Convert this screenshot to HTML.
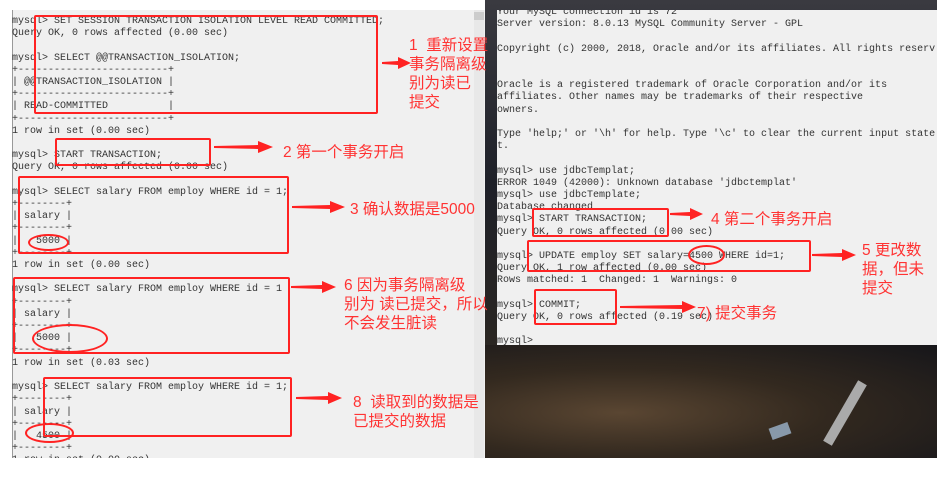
<!DOCTYPE html>
<html><head><meta charset="utf-8"><style>
body{margin:0;width:952px;height:481px;background:#fff;position:relative;overflow:hidden;font-family:"Liberation Mono",monospace}
.p{position:absolute}
.t{position:absolute;font-size:10px;line-height:12.2px;color:#333;white-space:pre;font-family:"Liberation Mono",monospace}
.b{position:absolute;border:2px solid #f22;border-radius:2px}
.e{position:absolute;border:2px solid #f22;border-radius:50%}
.l{position:absolute;color:#f33;font-family:"Liberation Sans","Noto Sans CJK SC",sans-serif;font-size:15.5px;line-height:19px;white-space:pre}
</style></head><body>
<div class="p" style="left:12px;top:10px;width:473px;height:448px;background:#f0f0f0;border-left:1px solid #999"></div>
<div class="p" style="left:474px;top:10px;width:10px;height:448px;background:#e8e8e8"></div>
<div class="p" style="left:474px;top:12px;width:10px;height:8px;background:#ccc"></div>
<div class="p" style="left:485px;top:0;width:452px;height:458px;background:linear-gradient(180deg,#3a3a40 0%,#1e2028 40%,#2a2622 75%,#4a3a2a 100%)"></div>
<div class="p" style="left:485px;top:345px;width:452px;height:113px;background:radial-gradient(ellipse at 30% 60%,#5a4632 0%,#33291f 45%,#16161a 100%)"></div>
<div class="p" style="left:840px;top:378px;width:10px;height:70px;background:#aaa;transform:rotate(30deg)"></div>
<div class="p" style="left:770px;top:425px;width:20px;height:12px;background:#8899aa;transform:rotate(-20deg)"></div>
<div class="p" style="left:497px;top:10px;width:440px;height:335px;background:#f0f0f0"></div>

<div class="t" style="left:12px;top:16px">mysql&gt; SET SESSION TRANSACTION ISOLATION LEVEL READ COMMITTED;
Query OK, 0 rows affected (0.00 sec)

mysql&gt; SELECT @@TRANSACTION_ISOLATION;
+-------------------------+
| @@TRANSACTION_ISOLATION |
+-------------------------+
| READ-COMMITTED          |
+-------------------------+
1 row in set (0.00 sec)

mysql&gt; START TRANSACTION;
Query OK, 0 rows affected (0.00 sec)

mysql&gt; SELECT salary FROM employ WHERE id = 1;
+--------+
| salary |
+--------+
|   5000 |
+--------+
1 row in set (0.00 sec)

mysql&gt; SELECT salary FROM employ WHERE id = 1
+--------+
| salary |
+--------+
|   5000 |
+--------+
1 row in set (0.03 sec)

mysql&gt; SELECT salary FROM employ WHERE id = 1;
+--------+
| salary |
+--------+
|   4500 |
+--------+
1 row in set (0.00 sec)</div>
<div class="p" style="left:12px;top:458px;width:480px;height:23px;background:#fff"></div>

<div class="t" style="left:497px;top:7px;clip-path:inset(3px 0 0 0)">Your MySQL connection id is 72
Server version: 8.0.13 MySQL Community Server - GPL

Copyright (c) 2000, 2018, Oracle and/or its affiliates. All rights reserv


Oracle is a registered trademark of Oracle Corporation and/or its
affiliates. Other names may be trademarks of their respective
owners.

Type 'help;' or '\h' for help. Type '\c' to clear the current input state
t.

mysql&gt; use jdbcTemplat;
ERROR 1049 (42000): Unknown database 'jdbctemplat'
mysql&gt; use jdbcTemplate;
Database changed
mysql&gt; START TRANSACTION;
Query OK, 0 rows affected (0.00 sec)

mysql&gt; UPDATE employ SET salary=4500 WHERE id=1;
Query OK, 1 row affected (0.00 sec)
Rows matched: 1  Changed: 1  Warnings: 0

mysql&gt; COMMIT;
Query OK, 0 rows affected (0.19 sec)

mysql&gt;</div>

<div class="b" style="left:34px;top:15px;width:340px;height:95px"></div>
<div class="b" style="left:55px;top:138px;width:152px;height:24px"></div>
<div class="b" style="left:18px;top:176px;width:267px;height:74px"></div>
<div class="b" style="left:13px;top:277px;width:273px;height:73px"></div>
<div class="b" style="left:43px;top:377px;width:245px;height:56px"></div>
<div class="e" style="left:28px;top:234px;width:37px;height:13px"></div>
<div class="e" style="left:32px;top:324px;width:72px;height:25px"></div>
<div class="e" style="left:25px;top:423px;width:45px;height:16px"></div>
<div class="b" style="left:532px;top:208px;width:133px;height:25px"></div>
<div class="b" style="left:527px;top:240px;width:280px;height:28px"></div>
<div class="e" style="left:688px;top:245px;width:33px;height:16px"></div>
<div class="b" style="left:534px;top:289px;width:79px;height:32px"></div>

<svg class="p" style="left:0;top:0" width="952" height="481">
<g fill="#f22">
<polygon points="382,62 398,61 398,57 411,63 398,69 398,65 382,64"/>
<polygon points="214,146 258,145 258,141 273,147 258,153 258,149 214,148"/>
<polygon points="292,206 330,205 330,201 345,207 330,213 330,209 292,208"/>
<polygon points="291,286 322,285 322,281 336,287 322,293 322,289 291,288"/>
<polygon points="296,397 328,396 328,392 342,398 328,404 328,400 296,399"/>
<polygon points="670,213 690,212 690,208 703,214 690,220 690,216 670,215"/>
<polygon points="812,254 842,253 842,249 856,255 842,261 842,257 812,256"/>
<polygon points="620,306 682,305 682,301 696,307 682,313 682,309 620,308"/>
</g></svg>

<div class="l" style="left:409px;top:36px">1  重新设置
事务隔离级
别为读已
提交</div>
<div class="l" style="left:283px;top:143px">2 第一个事务开启</div>
<div class="l" style="left:350px;top:200px">3 确认数据是5000</div>
<div class="l" style="left:344px;top:276px">6 因为事务隔离级
别为 读已提交，所以
不会发生脏读</div>
<div class="l" style="left:353px;top:393px">8  读取到的数据是
已提交的数据</div>
<div class="l" style="left:711px;top:210px">4 第二个事务开启</div>
<div class="l" style="left:862px;top:241px">5 更改数
据，但未
提交</div>
<div class="l" style="left:697px;top:304px">7) 提交事务</div>
</body></html>
